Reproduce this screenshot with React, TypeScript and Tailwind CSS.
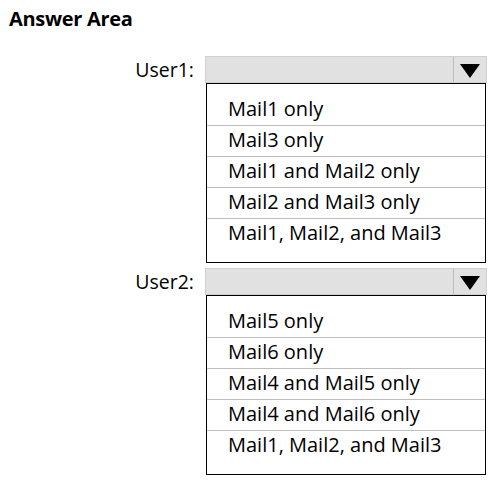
import React from 'react';

const groups = [
  {
    label: 'User1:',
    options: ['Mail1 only', 'Mail3 only', 'Mail1 and Mail2 only', 'Mail2 and Mail3 only', 'Mail1, Mail2, and Mail3'],
  },
  {
    label: 'User2:',
    options: ['Mail5 only', 'Mail6 only', 'Mail4 and Mail5 only', 'Mail4 and Mail6 only', 'Mail1, Mail2, and Mail3'],
  },
];

const Arrow = () => (
  <svg width="20" height="14" viewBox="0 0 20 14">
    <polygon points="0,0 20,0 10,14" fill="#000" />
  </svg>
);

const App = () => {
  return (
    <div className="w-[488px] h-[480px] bg-white text-black font-['Open_Sans',sans-serif]">
      <h1 className="pl-[9px] pt-[7px] text-[20px] leading-[24px] font-bold tracking-[-0.3px]">Answer Area</h1>

      <div className="mt-[25px] flex flex-col gap-[5px]">
        {groups.map((g) => (
          <div key={g.label} className="flex">
            <div className="w-[205px] h-[27px] pr-[11px] flex items-center justify-end text-[19.5px] leading-none">
              {g.label}
            </div>
            <div className="w-[282px]">
              <div className="h-[27px] flex bg-[#e1e1e1] border border-[#d0d0d0]">
                <div className="flex-1" />
                <div className="w-[33px] border-l border-[#bcbcbc] flex items-center justify-center pt-[2px]">
                  <Arrow />
                </div>
              </div>
              <div className="ml-[1px] w-[280px] border border-black pt-[10px] pb-[13px]">
                {g.options.map((o, i) => (
                  <div
                    key={o}
                    className={`h-[31px] pl-[21px] flex items-center text-[20px] leading-none pb-[2px] ${i > 0 ? 'border-t border-[#bdbdbd]' : ''}`}
                  >
                    {o}
                  </div>
                ))}
              </div>
            </div>
          </div>
        ))}
      </div>
    </div>
  );
};

export default App;
